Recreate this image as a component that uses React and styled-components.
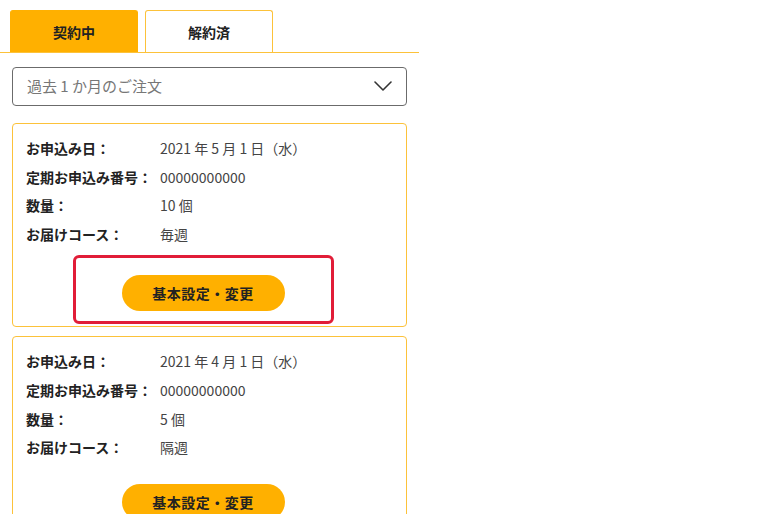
import React from "react";
import styled, { createGlobalStyle } from "styled-components";

const YELLOW = "#ffb000";
const YELLOW_LINE = "#fcc23a";

const GlobalStyle = createGlobalStyle`
  html, body {
    margin: 0;
    padding: 0;
    background: #fff;
  }
  body {
    font-family: "Noto Sans CJK JP", "Noto Sans", sans-serif;
    color: #222;
  }
`;

const Page = styled.div`
  width: 419px;
`;

const TabBar = styled.div`
  display: flex;
  gap: 7px;
  padding: 10px 0 0 10px;
  border-bottom: 1.5px solid ${YELLOW_LINE};
`;

const Tab = styled.div`
  width: 128px;
  height: 42px;
  box-sizing: border-box;
  display: flex;
  align-items: center;
  justify-content: center;
  border-radius: 3px 3px 0 0;
  font-size: 14px;
  font-weight: 700;
  color: #222;
  background: ${({ $active }) => ($active ? YELLOW : "#fff")};
  border: 1px solid ${({ $active }) => ($active ? YELLOW : YELLOW_LINE)};
  border-bottom: none;
`;

const Content = styled.div`
  padding: 14px 12px 0 12px;
`;

const Select = styled.div`
  height: 39px;
  box-sizing: border-box;
  border: 1px solid #6b6b6b;
  border-radius: 4px;
  display: flex;
  align-items: center;
  justify-content: space-between;
  padding: 0 14px 2px 14px;
  font-size: 15px;
  color: #777;
  margin-bottom: 17px;
`;

const Card = styled.div`
  border: 1px solid ${YELLOW_LINE};
  border-radius: 4px;
  padding: 10px 14px 15px 13px;
  margin-bottom: 9px;
`;

const Row = styled.div`
  display: flex;
  line-height: 28.6px;
  font-size: 14px;
`;

const Label = styled.span`
  width: 134px;
  flex-shrink: 0;
  font-weight: 700;
  color: #222;
`;

const Value = styled.span`
  color: #444;
`;

const Actions = styled.div`
  display: flex;
  justify-content: center;
  padding-right: 12px;
  margin-top: ${({ $gap }) => $gap}px;
`;

const ButtonWrap = styled.div`
  position: relative;
`;

const Highlight = styled.div`
  position: absolute;
  top: -20px;
  bottom: -13px;
  left: -49px;
  right: -49px;
  border: 3px solid #e11d38;
  border-radius: 6px;
  pointer-events: none;
`;

const Button = styled.button`
  width: 163px;
  height: 36px;
  border: none;
  border-radius: 18px;
  background: ${YELLOW};
  color: #222;
  font-family: inherit;
  font-size: 14px;
  font-weight: 700;
  letter-spacing: 0.5px;
  cursor: pointer;
`;

const Chevron = () => (
  <svg width="18" height="10" viewBox="0 0 18 10" fill="none">
    <path d="M1 1l8 8 8-8" stroke="#333" strokeWidth="1.6" strokeLinecap="round" strokeLinejoin="round" />
  </svg>
);

const orders = [
  { date: "2021 年 5 月 1 日（水）", no: "00000000000", qty: "10 個", course: "毎週", highlight: true },
  { date: "2021 年 4 月 1 日（水）", no: "00000000000", qty: "5 個", course: "隔週", highlight: false },
];

export default function App() {
  return (
    <Page>
      <GlobalStyle />
      <TabBar>
        <Tab $active>契約中</Tab>
        <Tab>解約済</Tab>
      </TabBar>
      <Content>
        <Select>
          <span>過去 1 か月のご注文</span>
          <Chevron />
        </Select>
        {orders.map((o, i) => (
          <Card key={i}>
            <Row>
              <Label>お申込み日：</Label>
              <Value>{o.date}</Value>
            </Row>
            <Row>
              <Label>定期お申込み番号：</Label>
              <Value>{o.no}</Value>
            </Row>
            <Row>
              <Label>数量：</Label>
              <Value>{o.qty}</Value>
            </Row>
            <Row>
              <Label>お届けコース：</Label>
              <Value>{o.course}</Value>
            </Row>
            <Actions $gap={o.highlight ? 27 : 22}>
              <ButtonWrap>
                {o.highlight && <Highlight />}
                <Button>基本設定・変更</Button>
              </ButtonWrap>
            </Actions>
          </Card>
        ))}
      </Content>
    </Page>
  );
}
